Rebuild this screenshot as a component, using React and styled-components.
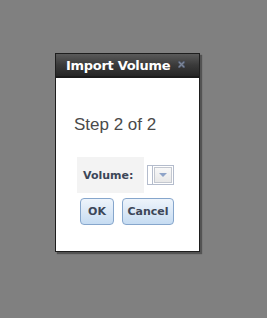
import React from 'react';
import styled, { createGlobalStyle } from 'styled-components';

const GlobalStyle = createGlobalStyle`
	html, body {
		margin: 0;
		padding: 0;
		background: #808080;
	}
	body {
		width: 267px;
		height: 318px;
		overflow: hidden;
	}
`;

const Page = styled.div`
	padding: 53px 0 0 55px;
`;

const Dialog = styled.div`
	width: 143px;
	height: 197px;
	background: #fff;
	border: 1px solid #1e1e1e;
	box-shadow: 2px 2px 1px rgba(0, 0, 0, 0.35);
	display: flex;
	flex-direction: column;
`;

const TitleBar = styled.div`
	height: 22px;
	display: flex;
	align-items: center;
	justify-content: space-between;
	padding: 0 14px 0 10px;
	background: linear-gradient(180deg, #5a5a5a 0%, #3a3a3a 50%, #262626 100%);
	border-bottom: 2px solid #1c1c1c;
`;

const Title = styled.span`
	font-family: 'DejaVu Sans', sans-serif;
	font-weight: bold;
	font-size: 13px;
	color: #fff;
	letter-spacing: -0.3px;
`;

const CloseIcon = () => (
	<svg width="7" height="7" viewBox="0 0 7 7" style={{ marginTop: -1 }}>
		<path d="M1 1 L6 6 M6 1 L1 6" stroke="#4e5668" strokeWidth="2.6" strokeLinecap="square" />
		<path d="M1 1 L6 6 M6 1 L1 6" stroke="#7c8698" strokeWidth="1.2" />
	</svg>
);

const Body = styled.div`
	padding: 37px 0 0 18px;
`;

const Step = styled.div`
	font-family: 'Liberation Sans', Arial, sans-serif;
	font-size: 17px;
	color: #4a4a4a;
	margin-bottom: 22px;
`;

const FormRow = styled.div`
	display: flex;
	align-items: center;
	gap: 3px;
	margin-left: 3px;
`;

const Label = styled.div`
	width: 67px;
	height: 36px;
	box-sizing: border-box;
	padding-left: 6px;
	display: flex;
	align-items: center;
	background: #f3f3f3;
	font-family: 'DejaVu Sans', sans-serif;
	font-weight: bold;
	font-size: 11px;
	color: #3c4658;
`;

const Select = styled.div`
	width: 27px;
	height: 20px;
	box-sizing: border-box;
	border: 1px solid #b4bccc;
	display: flex;
	background: #fff;
`;

const SelectEdge = styled.div`
	width: 4px;
	border-right: 1px solid #b4bccc;
`;

const SelectButton = styled.div`
	flex: 1;
	margin: 1px;
	border: 1px solid #c4c8d0;
	background: linear-gradient(180deg, #f8f8f8, #e8e8e8);
	display: flex;
	align-items: center;
	justify-content: center;

	&::after {
		content: '';
		border-left: 4px solid transparent;
		border-right: 4px solid transparent;
		border-top: 4px solid #8fa4c8;
	}
`;

const Buttons = styled.div`
	display: flex;
	gap: 8px;
	margin: 5px 0 0 6px;
`;

const Button = styled.button`
	height: 27px;
	width: ${(p) => p.$w}px;
	padding: 0;
	border: 1px solid #86a6cc;
	border-radius: 4px;
	background: linear-gradient(180deg, #eef4fb 0%, #dbe8f6 50%, #c6dcf2 100%);
	font-family: 'DejaVu Sans', sans-serif;
	font-weight: bold;
	font-size: 11px;
	color: #3c4658;
`;

export default function App() {
	return (
		<Page>
			<GlobalStyle />
			<Dialog>
				<TitleBar>
					<Title>Import Volume</Title>
					<CloseIcon />
				</TitleBar>
				<Body>
					<Step>Step 2 of 2</Step>
					<FormRow>
						<Label>Volume:</Label>
						<Select>
							<SelectEdge />
							<SelectButton />
						</Select>
					</FormRow>
					<Buttons>
						<Button $w={34}>OK</Button>
						<Button $w={52}>Cancel</Button>
					</Buttons>
				</Body>
			</Dialog>
		</Page>
	);
}
